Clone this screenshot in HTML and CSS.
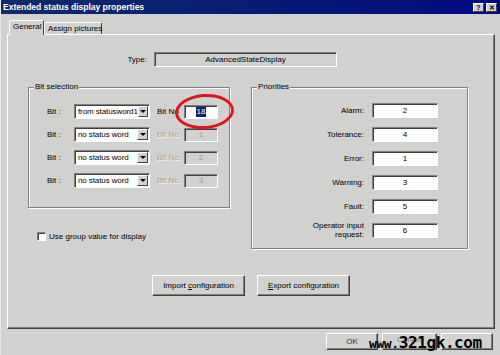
FILE: index.html
```html
<!DOCTYPE html>
<html>
<head>
<meta charset="utf-8">
<link rel="stylesheet" href="styles.css">
</head>
<body>
<div class="dialog">
  <div class="titlebar">
    <span class="title">Extended status display properties</span>
    <div class="tbtns"><span class="tbtn">?</span><span class="tbtn">✕</span></div>
  </div>
  <div class="tabs">
    <div class="tab active">General</div>
    <div class="tab">Assign pictures</div>
  </div>
  <div class="panel">
    <div class="type-row">
      <span class="type-label">Type:</span>
      <div class="field disabled type-field">AdvancedStateDisplay</div>
    </div>
    <div class="groups">
      <div class="left-col">
        <div class="group bit-group">
          <span class="legend">Bit selection</span>
          <div class="bit-row">
            <span class="bit-label">Bit :</span>
            <div class="combo"><span class="combo-text">from statusword1</span><span class="combo-btn"><span class="arrow"></span></span></div>
            <span class="bitno-label">Bit No</span>
            <div class="field bitno"><span class="sel">18</span></div>
          </div>
          <div class="bit-row">
            <span class="bit-label">Bit :</span>
            <div class="combo"><span class="combo-text">no status word</span><span class="combo-btn"><span class="arrow"></span></span></div>
            <span class="bitno-label dim">Bit No.</span>
            <div class="field bitno disabled">1</div>
          </div>
          <div class="bit-row">
            <span class="bit-label">Bit :</span>
            <div class="combo"><span class="combo-text">no status word</span><span class="combo-btn"><span class="arrow"></span></span></div>
            <span class="bitno-label dim">Bit No.</span>
            <div class="field bitno disabled">2</div>
          </div>
          <div class="bit-row">
            <span class="bit-label">Bit :</span>
            <div class="combo"><span class="combo-text">no status word</span><span class="combo-btn"><span class="arrow"></span></span></div>
            <span class="bitno-label dim">Bit No.</span>
            <div class="field bitno disabled">3</div>
          </div>
        </div>
        <div class="check-row"><span class="checkbox"></span><span>Use group value for display</span></div>
      </div>
      <div class="group prio-group">
        <span class="legend">Priorities</span>
        <div class="prio-row"><span class="prio-label">Alarm:</span><div class="field prio">2</div></div>
        <div class="prio-row"><span class="prio-label">Tolerance:</span><div class="field prio">4</div></div>
        <div class="prio-row"><span class="prio-label">Error:</span><div class="field prio">1</div></div>
        <div class="prio-row"><span class="prio-label">Warning:</span><div class="field prio">3</div></div>
        <div class="prio-row"><span class="prio-label">Fault:</span><div class="field prio">5</div></div>
        <div class="prio-row"><span class="prio-label two">Operator input<br>request:</span><div class="field prio">6</div></div>
      </div>
    </div>
    <div class="btn-row">
      <div class="btn cfg"><span>Import <u>c</u>onfiguration</span></div>
      <div class="btn cfg"><span><u>E</u>xport configuration</span></div>
    </div>
  </div>
  <div class="footer">
    <div class="btn fbtn ok">OK</div>
    <div class="btn fbtn cancel"><span class="cancel-text">Cancel</span></div>
    <div class="btn fbtn help"></div>
  </div>
  <div class="ellipse"></div>
  <div class="watermark"><span class="wm-small">www.</span>321gk.com</div>
</div>
</body>
</html>
```

FILE: styles.css
```css
* { box-sizing: border-box; }
html, body { margin: 0; padding: 0; }
body {
  width: 500px;
  height: 355px;
  overflow: hidden;
  background: #d1d1cf;
  font-family: "Liberation Sans", Arial, sans-serif;
  font-size: 8px;
  color: #000;
}
.dialog {
  position: relative;
  width: 500px;
  height: 355px;
  background: #d1d1cf;
  border-left: 1px solid #e8e8e8;
}
.titlebar {
  height: 14px;
  background: linear-gradient(90deg, #0c2a6c 0%, #0a1f74 40%, #000a80 100%);
  display: flex;
  align-items: center;
  justify-content: space-between;
  padding: 0 3px 0 2px;
}
.title {
  color: #fff;
  font-weight: bold;
  font-size: 8.6px;
  letter-spacing: -0.05px;
}
.tbtns { display: flex; gap: 2px; }
.tbtn {
  width: 11px;
  height: 9px;
  background: #d1d1cf;
  border: 1px solid;
  border-color: #fff #404040 #404040 #fff;
  font-size: 7px;
  font-weight: bold;
  line-height: 7px;
  text-align: center;
}
.tabs {
  display: flex;
  align-items: flex-end;
  margin: 6px 0 0 8px;
  height: 14px;
}
.tab {
  height: 12px;
  padding: 0 3px;
  border: 1px solid;
  border-color: #fff #404040 transparent #fff;
  border-bottom: none;
  border-radius: 2px 2px 0 0;
  line-height: 11px;
  white-space: nowrap;
}
.tab.active {
  width: 35px;
  padding: 0 3px;
  line-height: 12px;
  position: relative;
  z-index: 1;
  background: #d1d1cf;
  margin-bottom: -1px;
  height: 15px;
}
.tab + .tab { width: 58px; }
.panel {
  margin-left: 6px;
  width: 488px;
  height: 295px;
  border: 1px solid;
  border-color: #fff #404040 #404040 #fff;
  box-shadow: inset -1px -1px #808080;
}
.type-row {
  display: flex;
  align-items: center;
  margin-top: 17px;
}
.type-label {
  width: 139px;
  text-align: right;
  margin-right: 7px;
}
.field {
  height: 15px;
  background: #fff;
  border: 1px solid;
  border-color: #808080 #fff #fff #808080;
  box-shadow: inset 1px 1px #404040;
  display: flex;
  align-items: center;
  justify-content: center;
  font-size: 8px;
}
.field.disabled {
  background: #d1d1cf;
  color: #8a8a8a;
}
.type-field {
  width: 183px;
  box-shadow: inset 1px 1px #404040, inset -1px -1px #d1d1cf;
}
.type-field.disabled { color: #000; }
.groups {
  display: flex;
  align-items: flex-start;
  margin-top: 20px;
}
.left-col {
  margin-left: 20px;
  width: 202px;
}
.group {
  position: relative;
  border: 1px solid #808080;
  box-shadow: inset 1px 1px #fff, 1px 1px #fff;
}
.legend {
  position: absolute;
  top: -6px;
  left: 5px;
  padding: 0 1px;
  background: #d1d1cf;
  line-height: 10px;
}
.bit-group {
  width: 202px;
  height: 121px;
  padding: 12px 0 0 18px;
}
.bit-row {
  display: flex;
  align-items: center;
  height: 23px;
}
.bit-label { width: 27px; }
.combo {
  width: 76px;
  height: 15px;
  background: #fff;
  border: 1px solid;
  border-color: #808080 #fff #fff #808080;
  box-shadow: inset 1px 1px #404040;
  display: flex;
  align-items: center;
  justify-content: space-between;
  padding: 1px 1px 1px 3px;
}
.combo-text { white-space: nowrap; letter-spacing: -0.1px; }
.combo-btn {
  width: 11px;
  height: 11px;
  background: #d1d1cf;
  border: 1px solid;
  border-color: #fff #404040 #404040 #fff;
  display: flex;
  align-items: center;
  justify-content: center;
}
.arrow {
  width: 0;
  height: 0;
  border-left: 3px solid transparent;
  border-right: 3px solid transparent;
  border-top: 3px solid #000;
}
.bitno-label {
  width: 27px;
  margin-left: 7px;
  white-space: nowrap;
}
.bitno-label.dim {
  color: #9a9a9a;
  text-shadow: 1px 1px #fff;
}
.field.bitno {
  width: 34px;
  height: 14px;
}
.field.bitno.disabled { align-items: flex-start; padding-top: 1px; color: #9a9a9a; }
.sel {
  background: #0a246a;
  color: #fff;
  padding: 0 1px;
  line-height: 10px;
}
.check-row {
  display: flex;
  align-items: center;
  margin: 24px 0 0 9px;
}
.checkbox {
  width: 9px;
  height: 9px;
  background: #fff;
  border: 1px solid;
  border-color: #808080 #fff #fff #808080;
  box-shadow: inset 1px 1px #404040;
  margin-right: 3px;
}
.prio-group {
  margin-left: 21px;
  width: 217px;
  height: 162px;
  padding-top: 10px;
}
.prio-row {
  display: flex;
  align-items: center;
  height: 24px;
}
.prio-label {
  width: 112px;
  text-align: right;
  margin-right: 8px;
}
.prio-label.two { line-height: 9px; }
.field.prio { width: 66px; }
.btn-row {
  display: flex;
  gap: 12px;
  margin: 26px 0 0 144px;
}
.btn {
  height: 21px;
  background: #d1d1cf;
  border: 1px solid;
  border-color: #fff #404040 #404040 #fff;
  box-shadow: inset -1px -1px #808080;
  display: flex;
  align-items: center;
  justify-content: center;
}
.btn.cfg { width: 93px; }
.footer {
  display: flex;
  justify-content: flex-end;
  gap: 4px;
  margin-top: 4px;
  padding-right: 7px;
}
.fbtn { height: 17px; }
.fbtn.ok { width: 52px; color: #333; }
.fbtn.cancel { width: 55px; align-items: flex-start; padding-top: 1px; }
.cancel-text { color: #777; }
.fbtn.help { width: 52px; }
.ellipse {
  position: absolute;
  left: 174px;
  top: 94px;
  width: 59px;
  height: 35px;
  border: 3px solid #e0141b;
  border-radius: 50%;
  transform: rotate(-4deg);
}
.watermark {
  position: absolute;
  left: 368px;
  top: 334px;
  font-family: "DejaVu Sans Mono", monospace;
  font-weight: bold;
  font-size: 16px;
  line-height: 18px;
  color: #000;
  letter-spacing: -0.4px;
}
.wm-small { font-size: 13px; }
```
